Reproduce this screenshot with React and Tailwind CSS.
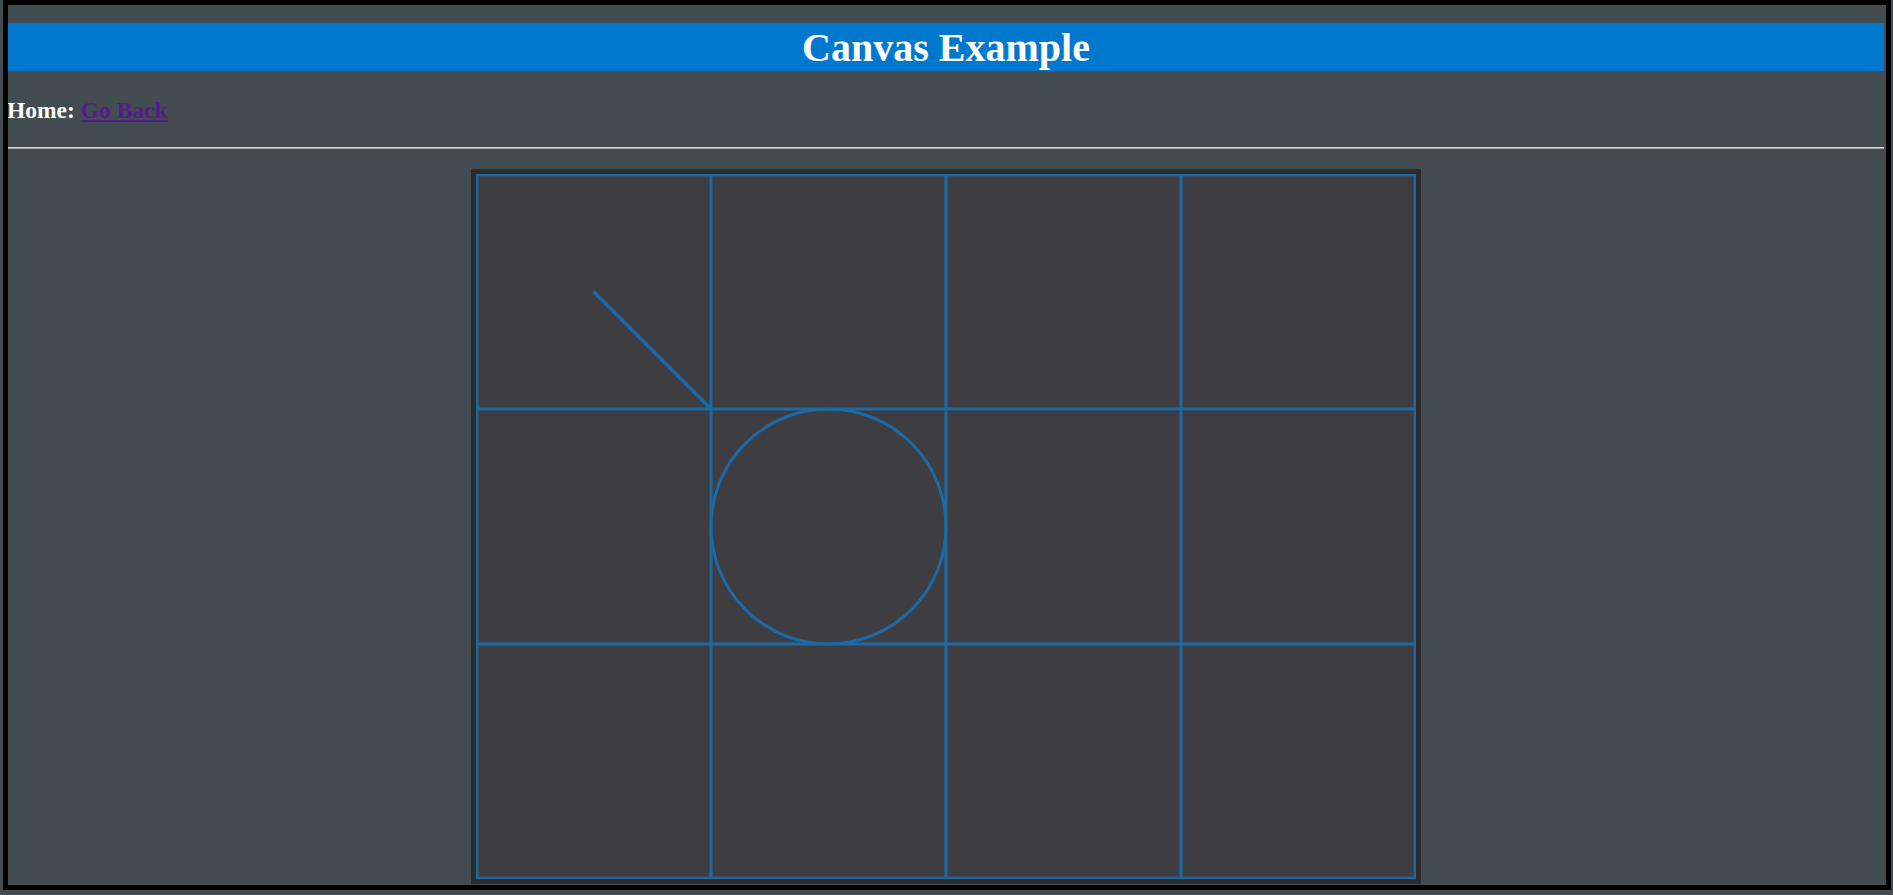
export default function App() {
  const blue = "#1b6aa6";
  const sw = 3;
  return (
    <div className="w-full h-[895px] bg-[#424c51] pl-[3px] pr-[2px] pb-[5px] overflow-hidden" style={{ fontFamily: '"Liberation Serif", "Times New Roman", serif' }}>
      <div className="h-full border-[5px] border-black pr-[2px] overflow-hidden flex flex-col">
        <h1 className="mt-[18px] bg-[#0078cd] text-white text-[40px] font-bold text-center leading-[47px] pt-[1px]">
          Canvas Example
        </h1>
        <p className="mt-[27px] text-[23.5px] font-bold leading-[24px] text-white -ml-[1px]">
          Home: <a href="#" className="text-[#531b8c] underline">Go Back</a>
        </p>
        <div className="mt-[25px] h-[2px] bg-[#d4d4d4] border-b border-[#aaaaaa]" />
        <div className="mt-[20px] flex justify-center">
          <div className="border-[5px] border-[#2c2c2f] bg-[#3e3d42] w-[950px] h-[715px] shrink-0">
            <svg width="940" height="705" viewBox="0 0 940 705" className="block">
              <rect x="0" y="0" width="940" height="705" fill="#3e3d42" />
              <g stroke={blue} strokeWidth={sw} fill="none">
                <rect x="1" y="1" width="938" height="703" strokeWidth="2.6" />
                <line x1="235" y1="0" x2="235" y2="705" />
                <line x1="470" y1="0" x2="470" y2="705" />
                <line x1="705" y1="0" x2="705" y2="705" />
                <line x1="0" y1="235" x2="940" y2="235" />
                <line x1="0" y1="470" x2="940" y2="470" />
                <line x1="117.5" y1="117.5" x2="235" y2="235" strokeWidth="3.3" />
                <circle cx="352.5" cy="352.5" r="117.5" />
              </g>
            </svg>
          </div>
        </div>
      </div>
    </div>
  );
}
